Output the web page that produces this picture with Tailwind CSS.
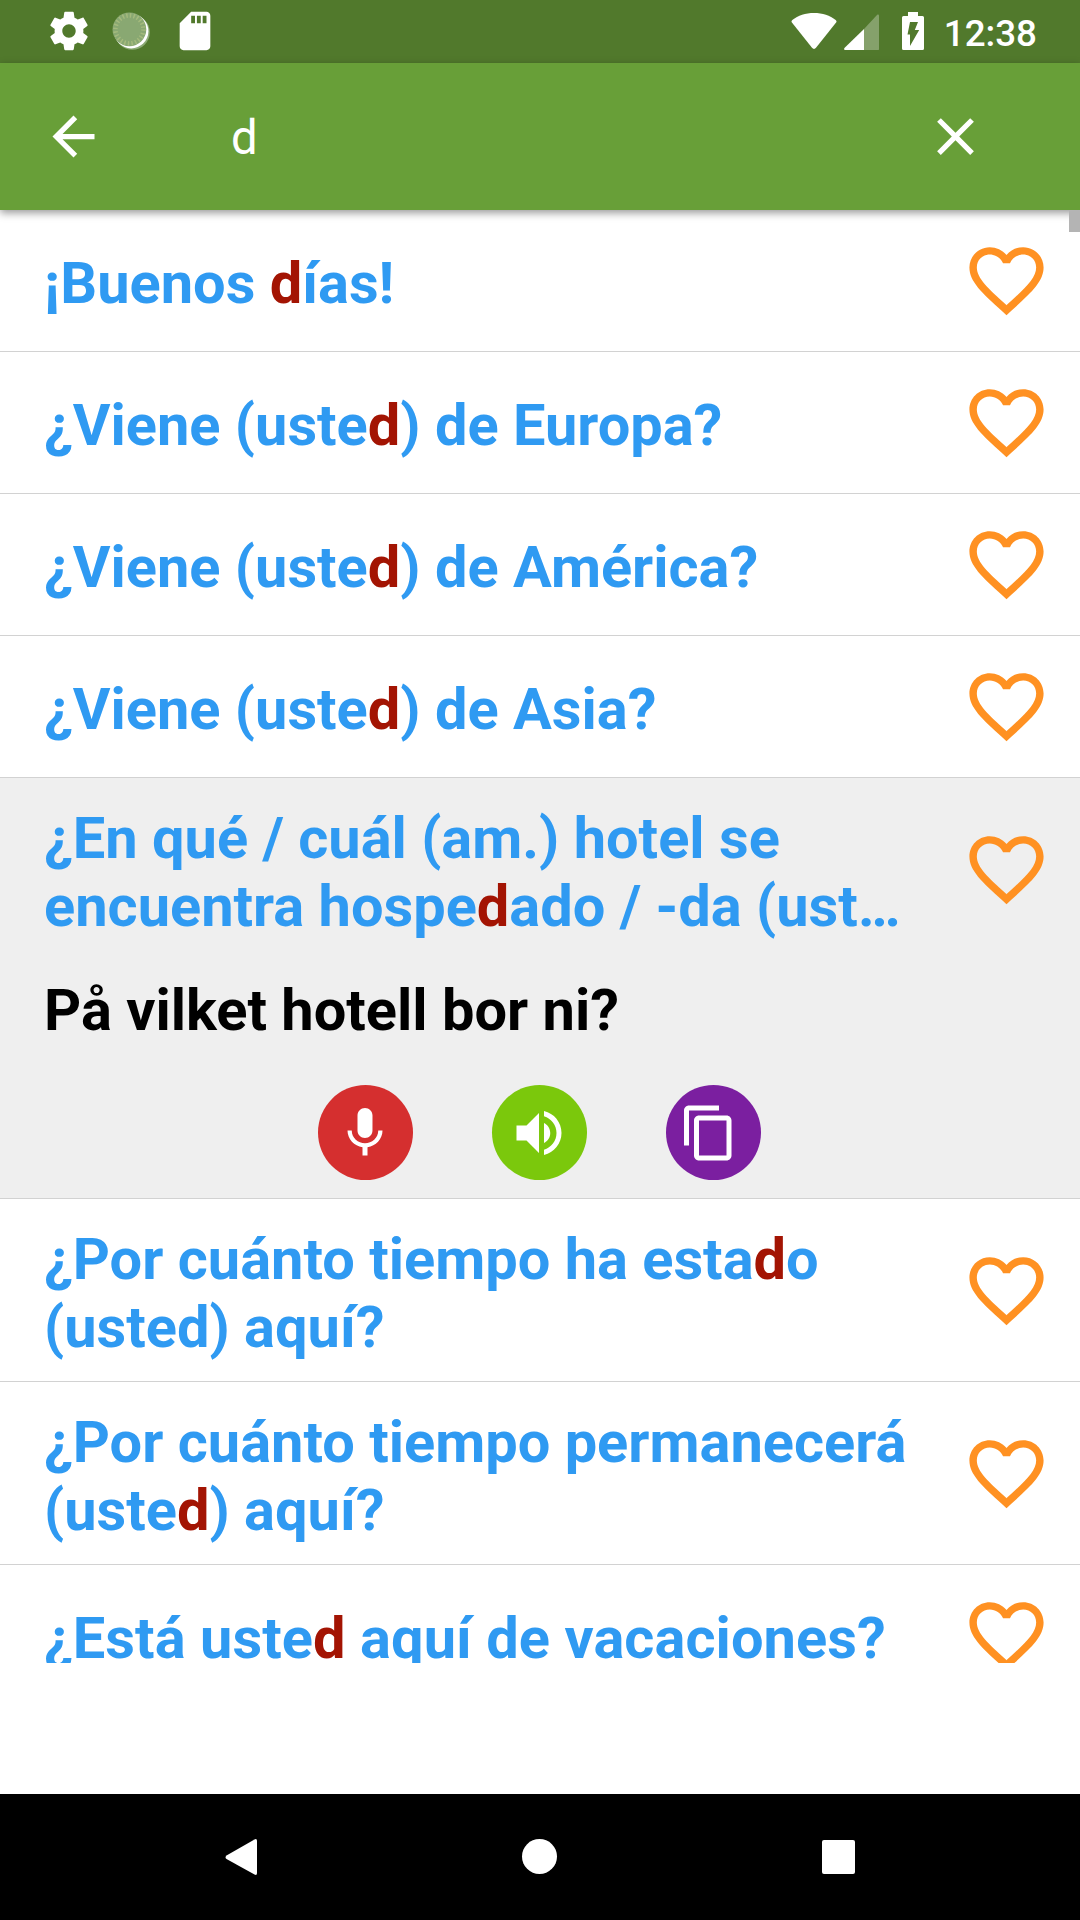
<!DOCTYPE html>
<html lang="es">
<head>
<meta charset="utf-8">
<title>Frases</title>
<script src="https://cdn.jsdelivr.net/npm/@tailwindcss/browser@4"></script>
</head>
<body class="bg-white">
<svg class="hidden">
  <symbol id="heart" viewBox="0 0 24 24"><path d="M16.5 3c-1.74 0-3.41.81-4.5 2.09C10.91 3.81 9.24 3 7.5 3 4.42 3 2 5.42 2 8.5c0 3.78 3.4 6.86 8.55 11.54L12 21.35l1.45-1.32C18.6 15.36 22 12.28 22 8.5 22 5.42 19.58 3 16.5 3zm-4.4 15.55l-.1.1-.1-.1C7.14 14.24 4 11.39 4 8.5 4 6.5 5.5 5 7.5 5c1.54 0 3.04.99 3.57 2.36h1.87C13.46 5.99 14.96 5 16.5 5c2 0 3.5 1.5 3.5 3.5 0 2.89-3.14 5.74-7.9 10.05z"/></symbol>
</svg>
<div class="flex h-[1920px] w-[1080px] flex-col overflow-hidden bg-white font-[Roboto,sans-serif]">
  <!-- Status bar -->
  <header class="flex h-[63px] shrink-0 items-start bg-[#51792c] text-white">
    <svg class="ml-[45.5px] mt-2 size-[46px]" viewBox="0 0 24 24" fill="currentColor"><path d="M19.43 12.98c.04-.32.07-.64.07-.98s-.03-.66-.07-.98l2.11-1.65c.19-.15.24-.42.12-.64l-2-3.46c-.12-.22-.39-.3-.61-.22l-2.49 1c-.52-.4-1.08-.73-1.69-.98l-.38-2.65C14.46 2.18 14.25 2 14 2h-4c-.25 0-.46.18-.49.42l-.38 2.65c-.61.25-1.17.59-1.69.98l-2.49-1c-.23-.09-.49 0-.61.22l-2 3.46c-.13.22-.07.49.12.64l2.11 1.65c-.04.32-.07.65-.07.98s.03.66.07.98l-2.11 1.65c-.19.15-.24.42-.12.64l2 3.46c.12.22.39.3.61.22l2.49-1c.52.4 1.08.73 1.69.98l.38 2.65c.03.24.24.42.49.42h4c.25 0 .46-.18.49-.42l.38-2.65c.61-.25 1.17-.59 1.69-.98l2.49 1c.23.09.49 0 .61-.22l2-3.46c.12-.22.07-.49-.12-.64l-2.11-1.65zM12 15.5c-1.93 0-3.5-1.57-3.5-3.5s1.57-3.5 3.5-3.5 3.5 1.57 3.5 3.5-1.57 3.5-3.5 3.5z"/></svg>
    <svg class="ml-[19.5px] mt-[11px] h-10 w-10" viewBox="0 0 40 40">
      <circle cx="21.3" cy="21.3" r="17.5" fill="#8caa75"/>
      <circle cx="20.2" cy="20.2" r="17.2" fill="#fff"/>
      <circle cx="18.4" cy="18.4" r="16.9" fill="#89a872"/>
      <circle cx="18.4" cy="18.4" r="14" fill="none" stroke="#a5ba7d" stroke-width="4.5" stroke-dasharray="1.5 2.165"/>
    </svg>
    <svg class="ml-[20.5px] mt-2 size-[46px]" viewBox="0 0 24 24" fill="currentColor"><path d="M18 2h-8L4.02 8 4 20c0 1.1.9 2 2 2h12c1.1 0 2-.9 2-2V4c0-1.1-.9-2-2-2zm-6 6h-2V4h2v4zm3 0h-2V4h2v4zm3 0h-2V4h2v4z"/></svg>
    <svg class="ml-auto mt-3 h-[38px] w-[46px]" viewBox="0 0 46 38" fill="currentColor"><path d="M1.3 8C7 3.5 14.5 1 23 1s16 2.5 21.7 7c1 .9 1 1.7.4 2.5L25 35.800c-1.2 1.5-2.8 1.5-4 0L.9 10.5C.3 9.7.3 8.9 1.3 8z"/></svg>
    <svg class="ml-[7px] mt-[14px] h-9 w-9" viewBox="0 0 36 36" fill="currentColor"><path d="M20 15V36H34.5L35 35.5V1.5C35 .5 34 .3 33 1z" class="opacity-30"/><path d="M20 15V36H1.5C0 36-.3 34.8.7 33.8z"/></svg>
    <svg class="ml-[22px] mt-3 h-[38px] w-[22px]" viewBox="0 0 22 38"><path d="M6 0H16V4H20.5Q22 4 22 5.5V36.5Q22 38 20.5 38H1.5Q0 38 0 36.5V5.5Q0 4 1.5 4H6z" fill="#fff"/><path d="M8 10H16L12.8 18H17.2L8 34V22.5H5.5z" fill="#51792c"/></svg>
    <span class="ml-[20px] mr-[43px] mt-[12px] text-[36.75px] leading-[43px] font-medium">12:38</span>
  </header>
  <!-- Search bar -->
  <div class="relative z-10 flex h-[147px] shrink-0 items-center bg-[#689f38] text-white shadow-[0_3px_8px_rgba(0,0,0,0.4)]">
    <svg class="ml-[42px] size-[63px]" viewBox="0 0 24 24" fill="currentColor"><path d="M20 11H7.83l5.59-5.59L12 4l-8 8 8 8 1.41-1.41L7.83 13H20v-2z"/></svg>
    <span class="ml-[126px] pt-[2px] text-[47.25px] leading-[56px]">d</span>
    <svg class="ml-auto mr-[93px] size-[63px]" viewBox="0 0 24 24" fill="currentColor"><path d="M19 6.41L17.59 5 12 10.59 6.41 5 5 6.41 10.59 12 5 17.59 6.41 19 12 13.41 17.59 19 19 17.59 13.41 12z"/></svg>
    <div class="absolute right-0 top-full h-[22px] w-[11px] bg-[#b4b4b4]"></div>
  </div>
  <!-- Phrase list -->
  <main class="h-[1453px] shrink-0 overflow-hidden text-[57.75px] leading-[68px] font-bold text-[#2f9af2]">
    <div class="flex h-[142px] items-center border-b border-[#d2d2d2] pl-11 pr-[29px]">
      <p class="flex-1 pt-[5px] whitespace-nowrap">¡Buenos <span class="text-[#a31403]">d</span>ías!</p>
      <svg class="size-[89px] fill-[#ff9122]"><use href="#heart"/></svg>
    </div>
    <div class="flex h-[142px] items-center border-b border-[#d2d2d2] pl-11 pr-[29px]">
      <p class="flex-1 pt-[5px] whitespace-nowrap">¿Viene (uste<span class="text-[#a31403]">d</span>) de Europa?</p>
      <svg class="size-[89px] fill-[#ff9122]"><use href="#heart"/></svg>
    </div>
    <div class="flex h-[142px] items-center border-b border-[#d2d2d2] pl-11 pr-[29px]">
      <p class="flex-1 pt-[5px] whitespace-nowrap">¿Viene (uste<span class="text-[#a31403]">d</span>) de América?</p>
      <svg class="size-[89px] fill-[#ff9122]"><use href="#heart"/></svg>
    </div>
    <div class="flex h-[142px] items-center border-b border-[#d2d2d2] pl-11 pr-[29px]">
      <p class="flex-1 pt-[5px] whitespace-nowrap">¿Viene (uste<span class="text-[#a31403]">d</span>) de Asia?</p>
      <svg class="size-[89px] fill-[#ff9122]"><use href="#heart"/></svg>
    </div>
    <div class="flex h-[421px] flex-col border-b border-[#d2d2d2] bg-[#efefef]">
      <div class="flex h-[182px] items-center pl-11 pr-[29px]">
        <p class="flex-1 pt-[5px] whitespace-nowrap">¿En qué / cuál (am.) hotel se<br>encuentra hospe<span class="text-[#a31403]">d</span>ado / -da (ust…</p>
        <svg class="size-[89px] fill-[#ff9122]"><use href="#heart"/></svg>
      </div>
      <p class="pl-11 pt-4 text-black">På vilket hotell bor ni?</p>
      <div class="mt-[41px] flex justify-center gap-[79px] pr-[2px] text-white">
        <button class="flex size-[95px] items-center justify-center rounded-full bg-[#d52f2f]">
          <svg class="size-[60px]" viewBox="0 0 24 24" fill="currentColor"><path d="M12 14c1.66 0 2.99-1.34 2.99-3L15 5c0-1.66-1.34-3-3-3S9 3.34 9 5v6c0 1.66 1.34 3 3 3zm5.3-3c0 3-2.54 5.1-5.3 5.1S6.7 14 6.7 11H5c0 3.41 2.72 6.23 6 6.72V21h2v-3.28c3.28-.48 6-3.3 6-6.72h-1.7z"/></svg>
        </button>
        <button class="flex size-[95px] items-center justify-center rounded-full bg-[#7bc80c]">
          <svg class="size-[60px]" viewBox="0 0 24 24" fill="currentColor"><path d="M3 9v6h4l5 5V4L7 9H3zm13.5 3c0-1.77-1.02-3.29-2.5-4.03v8.05c1.48-.73 2.5-2.25 2.5-4.02zM14 3.23v2.06c2.89.86 5 3.54 5 6.71s-2.11 5.85-5 6.71v2.06c4.01-.91 7-4.49 7-8.77s-2.99-7.86-7-8.77z"/></svg>
        </button>
        <button class="flex size-[95px] items-center justify-center rounded-full bg-[#7b1fa0] pr-[9px]">
          <svg class="size-[60px]" viewBox="0 0 24 24" fill="currentColor"><path d="M16 1H4c-1.1 0-2 .9-2 2v14h2V3h12V1zm3 4H8c-1.1 0-2 .9-2 2v14c0 1.1.9 2 2 2h11c1.1 0 2-.9 2-2V7c0-1.1-.9-2-2-2zm0 16H8V7h11v14z"/></svg>
        </button>
      </div>
    </div>
    <div class="flex h-[183px] items-center border-b border-[#d2d2d2] pl-11 pr-[29px]">
      <p class="flex-1 pt-[5px] whitespace-nowrap">¿Por cuánto tiempo ha esta<span class="text-[#a31403]">d</span>o<br>(usted) aquí?</p>
      <svg class="size-[89px] fill-[#ff9122]"><use href="#heart"/></svg>
    </div>
    <div class="flex h-[183px] items-center border-b border-[#d2d2d2] pl-11 pr-[29px]">
      <p class="flex-1 pt-[5px] whitespace-nowrap">¿Por cuánto tiempo permanecerá<br>(uste<span class="text-[#a31403]">d</span>) aquí?</p>
      <svg class="size-[89px] fill-[#ff9122]"><use href="#heart"/></svg>
    </div>
    <div class="flex h-[142px] items-center border-b border-[#d2d2d2] pl-11 pr-[29px]">
      <p class="flex-1 pt-[5px] whitespace-nowrap tracking-[0.06px]">¿Está uste<span class="text-[#a31403]">d</span> aquí de vacaciones?</p>
      <svg class="size-[89px] fill-[#ff9122]"><use href="#heart"/></svg>
    </div>
  </main>
  <!-- Navigation bar -->
  <nav class="mt-auto flex h-[126px] shrink-0 items-center justify-between bg-black px-[225px] pb-px text-white">
    <svg class="h-9 w-8" viewBox="0 0 32 36" fill="currentColor"><path d="M29.5.5Q32-.8 32 2V34Q32 36.8 29.5 35.5L1.500 20Q-.5 18.500 1.500 16.500z"/></svg>
    <div class="size-[35px] rounded-full bg-white"></div>
    <div class="h-[34px] w-[33px] rounded-[2px] bg-white"></div>
  </nav>
</div>
</body>
</html>
